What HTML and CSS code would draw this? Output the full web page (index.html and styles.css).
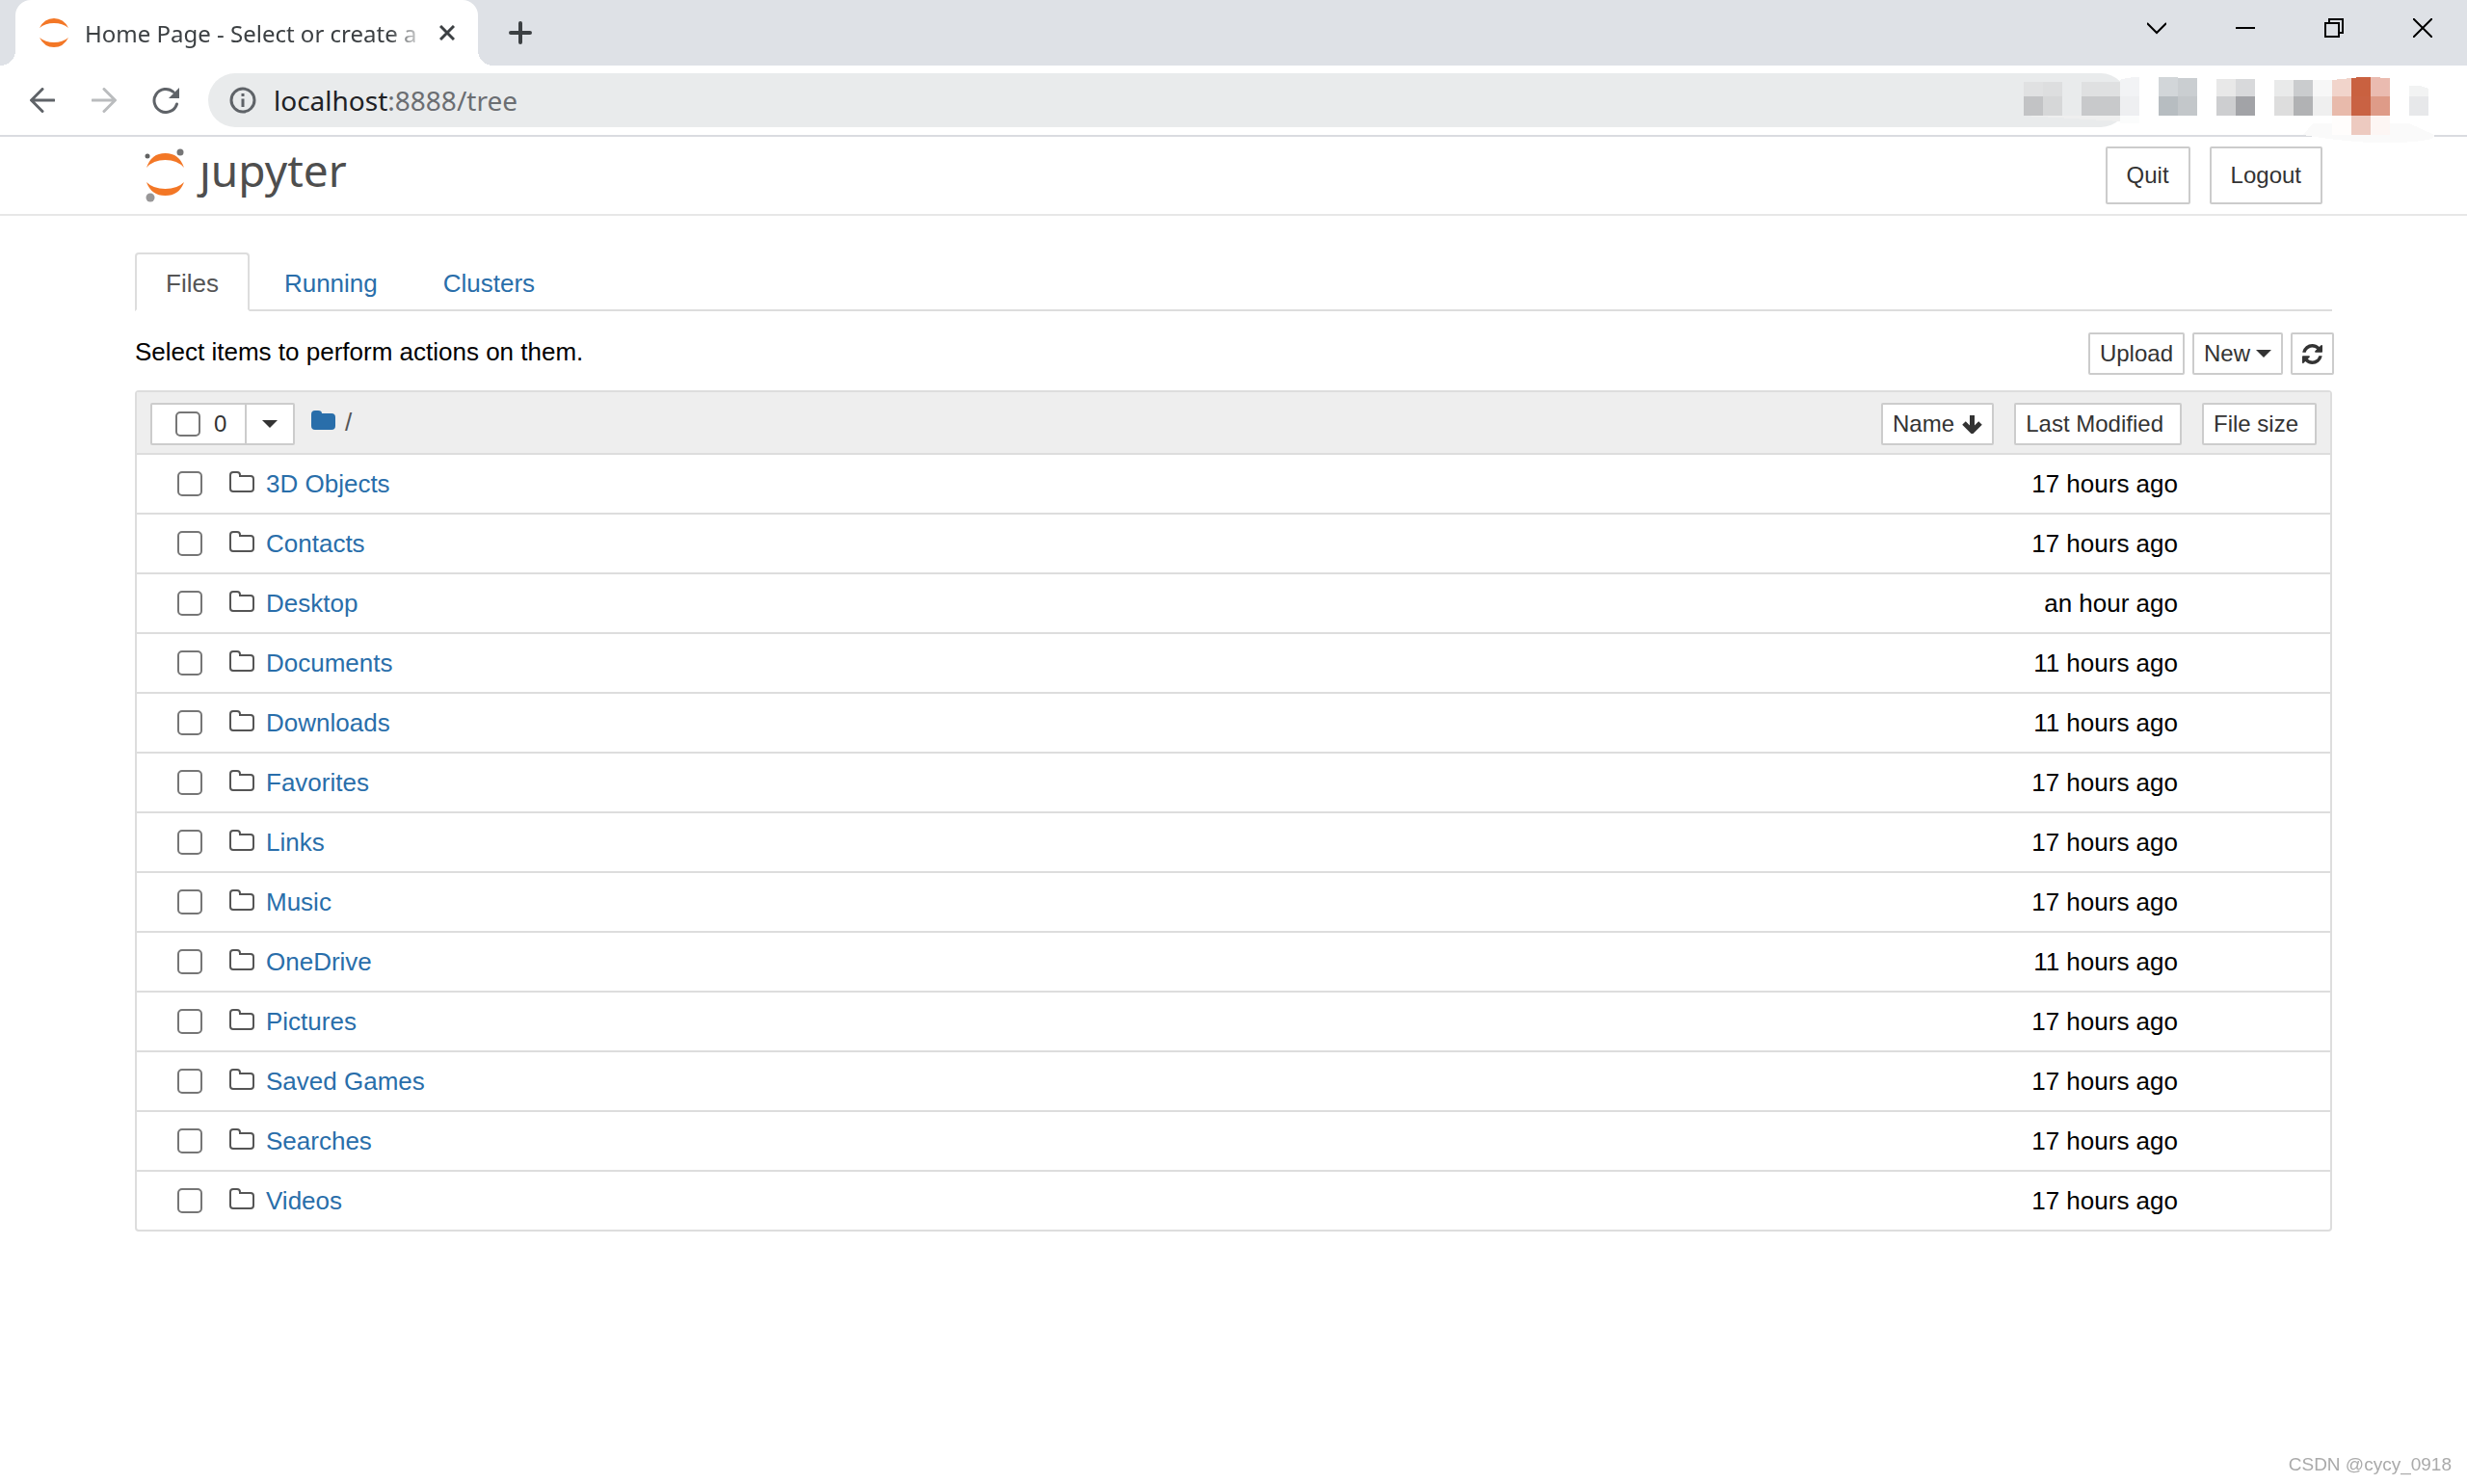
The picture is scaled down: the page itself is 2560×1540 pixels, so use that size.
FILE: index.html
```
<!DOCTYPE html>
<html lang="en">
<head>
<meta charset="utf-8">
<title>Home Page - Select or create a notebook</title>
<link rel="stylesheet" href="styles.css">
</head>
<body>
<svg class="defs" aria-hidden="true">
  <symbol id="folder-o" viewBox="0 0 26 22"><path d="M1 4Q1 1 4 1H8Q11 1 11 4V5H22Q25 5 25 8V18Q25 21 22 21H4Q1 21 1 18Z" fill="none" stroke="#555" stroke-width="2"/></symbol>
</svg>
<div class="tabstrip">
  <div class="browser-tab">
    <svg class="favicon" viewBox="0 0 30 30"><path d="M0 10Q5 0 15 0T30 10Q24 5 15 5T0 10ZM0 20Q5 30 15 30T30 20Q24 25 15 25T0 20Z" fill="#f37726"/></svg>
    <span class="tab-title">Home Page - Select or create a</span>
    <button class="icon-btn" aria-label="Close tab"><svg width="16" height="16" viewBox="0 0 16 16"><path d="M1 1L15 15M15 1L1 15" stroke="#3c4043" stroke-width="3"/></svg></button>
  </div>
  <button class="icon-btn new-tab" aria-label="New tab"><svg width="24" height="24" viewBox="0 0 24 24"><path d="M12 2V22M2 12H22" stroke="#3c4043" stroke-width="4" stroke-linecap="round"/></svg></button>
  <div class="window-controls">
    <button class="icon-btn" aria-label="Search tabs"><svg width="20" height="20" viewBox="0 0 20 20"><path d="M0 5L10 15L20 5" fill="none" stroke="#000" stroke-width="2"/></svg></button>
    <button class="icon-btn" aria-label="Minimize"><svg width="20" height="20" viewBox="0 0 20 20"><path d="M0 10H20" stroke="#000" stroke-width="2"/></svg></button>
    <button class="icon-btn" aria-label="Restore"><svg width="20" height="20" viewBox="0 0 20 20"><path d="M1 5H15V19H1ZM5 5V1H19V15H15" fill="none" stroke="#000" stroke-width="2"/></svg></button>
    <button class="icon-btn" aria-label="Close"><svg width="20" height="20" viewBox="0 0 20 20"><path d="M0 0L20 20M20 0L0 20" stroke="#000" stroke-width="2"/></svg></button>
  </div>
</div>
<div class="toolbar">
  <button class="icon-btn nav-btn" aria-label="Back"><svg width="26" height="26" viewBox="0 0 26 26"><path d="M25 13H2M13 1.500L1.500 13L13 24.500" fill="none" stroke="#5f6368" stroke-width="3" stroke-linecap="round"/></svg></button>
  <button class="icon-btn nav-btn" aria-label="Forward"><svg width="26" height="26" viewBox="0 0 26 26"><path d="M1 13H24M13 1.500L24.500 13L13 24.500" fill="none" stroke="#babcbe" stroke-width="3" stroke-linecap="round"/></svg></button>
  <button class="icon-btn nav-btn" aria-label="Reload"><svg width="28" height="28" viewBox="0 0 28 28"><path d="M25.500 18A12 12 0 1 1 22 5.500" fill="none" stroke="#5f6368" stroke-width="3" stroke-linecap="round"/><path d="M28 1V12H17Z" fill="#5f6368"/></svg></button>
  <div class="omnibox">
    <svg width="28" height="28" viewBox="0 0 28 28"><circle cx="14" cy="14" r="12" fill="none" stroke="#5f6368" stroke-width="3"/><path d="M14 12.500V21M14 7V10" stroke="#5f6368" stroke-width="3"/></svg>
    <span class="url">localhost<span class="url-rest">:8888/tree</span></span>
  </div>
  <svg class="mosaic" width="500" height="84" viewBox="0 0 500 84" shape-rendering="crispEdges">
    <path d="M330 72Q390 82 430 80T466 72L440 60H340Z" fill="#fafafa"/>
    <path d="M40 17H60V32H40Z" fill="#e0e1e2"/><path d="M60 17H80V32H60Z" fill="#dddedf"/>
    <path d="M40 32H60V52H40Z" fill="#c2c3c5"/><path d="M60 32H80V52H60Z" fill="#d6d7d8"/>
    <path d="M100 17H140V32H100Z" fill="#dfe0e1"/><path d="M100 32H140V52H100Z" fill="#c8c9cb"/>
    <path d="M140 15Q147 12 160 12V32H140Z" fill="#f2f3f5"/><path d="M140 32H160V52H140Z" fill="#eeeff1"/><path d="M140 52H160V60H140Z" fill="#fbfcfc"/>
    <path d="M40 52H140V58Z" fill="#efefef"/>
    <path d="M180 12H200V32H180Z" fill="#d2d6d9"/><path d="M200 13H220V32H200Z" fill="#caced1"/>
    <path d="M180 32H200V52H180Z" fill="#b7bdc1"/><path d="M200 32H220V52H200Z" fill="#c3c7ca"/>
    <path d="M240 14H260V32H240Z" fill="#e8e8e8"/><path d="M260 14H280V32H260Z" fill="#d8d9db"/>
    <path d="M240 32H260V52H240Z" fill="#cdced0"/><path d="M260 32H280V52H260Z" fill="#a2a3a7"/>
    <path d="M300 15H320V32H300Z" fill="#e9eaea"/><path d="M320 15H340V32H320Z" fill="#caccce"/><path d="M340 15H360V32H340Z" fill="#f7f7f7"/>
    <path d="M300 32H320V52H300Z" fill="#dddddd"/><path d="M320 32H340V52H320Z" fill="#b1b2b4"/><path d="M340 32H360V52H340Z" fill="#efefef"/>
    <path d="M360 15L380 13V32H360Z" fill="#f1d4cb"/><path d="M380 13L390 12H400V32H380Z" fill="#c96140"/><path d="M400 12L420 13V32H400Z" fill="#eabbb0"/>
    <path d="M360 32H380V52H360Z" fill="#e8baab"/><path d="M380 32H400V52H380Z" fill="#c96243"/><path d="M400 32H420V52H400Z" fill="#de9b88"/>
    <path d="M360 52H380V72H360Z" fill="#fffdfc"/><path d="M380 52H400V72H380Z" fill="#edcac0"/><path d="M400 52H420V72H400Z" fill="#fdf6f4"/>
    <path d="M440 21H452L460 24V32H440Z" fill="#f2f3f3"/><path d="M440 32H460V52H440Z" fill="#e7e8ea"/>
  </svg>
</div>
<header class="site-header">
  <div class="container header-inner">
    <a class="logo" href="#" aria-label="jupyter">
      <svg width="42" height="56" viewBox="0 0 42 56"><path d="M2 20Q7 5 21.500 5T41 20Q34 12 21.500 12T2 20ZM2 35Q7 49 21.500 49T41 35Q34 42 21.500 42T2 35Z" fill="#f37726"/><circle cx="37" cy="4" r="3.500" fill="#767677"/><circle cx="3" cy="8" r="2.500" fill="#616262"/><circle cx="6" cy="51" r="4.500" fill="#989798"/></svg>
      <span class="logo-text">ȷupyter</span>
    </a>
    <div class="header-actions">
      <button class="btn btn-lg">Quit</button>
      <button class="btn btn-lg">Logout</button>
    </div>
  </div>
</header>
<main class="container">
  <nav class="tabs">
    <a class="tab active" href="#files">Files</a>
    <a class="tab" href="#running">Running</a>
    <a class="tab" href="#clusters">Clusters</a>
  </nav>
  <div class="list-toolbar">
    <span class="hint">Select items to perform actions on them.</span>
    <div class="list-actions">
      <button class="btn">Upload</button>
      <button class="btn">New<span class="caret"></span></button>
      <button class="btn" aria-label="Refresh"><svg width="21" height="21" viewBox="0 0 1536 1536"><path fill="#333" d="M1511 928q0 5-1 7-64 268-268 434.500T764 1536q-146 0-282.500-55T238 1324l-129 129q-19 19-45 19t-45-19-19-45V960q0-26 19-45t45-19h448q26 0 45 19t19 45-19 45l-137 137q71 66 161 102t187 36q134 0 250-65t186-179q11-17 53-117 8-23 30-23h192q13 0 22.500 9.500t9.500 22.500zm25-800v448q0 26-19 45t-45 19h-448q-26 0-45-19t-19-45 19-45l138-138Q969 256 768 256q-134 0-250 65T332 500q-11 17-53 117-8 23-30 23H50q-13 0-22.500-9.500T18 608v-7q65-268 270-434.500T768 0q146 0 284 55.500T1297 212l130-129q19-19 45-19t45 19 19 45z"/></svg></button>
    </div>
  </div>
  <table class="files">
    <thead>
      <tr>
        <th class="col-name">
          <div class="name-head">
            <div class="selector">
              <label class="select-all"><input type="checkbox"><span>0</span></label>
              <button class="select-menu" aria-label="Select menu"><span class="caret"></span></button>
            </div>
            <a class="crumb" href="#root" aria-label="Home folder"><svg width="25" height="20" viewBox="0 0 25 20"><path d="M0 4Q0 0 4 0H7Q11 0 11 3H21Q25 3 25 7V16Q25 20 21 20H4Q0 20 0 16Z" fill="#296eaa"/></svg></a>
            <span class="slash">/</span>
            <button class="btn sort-name">Name<svg width="21" height="20" viewBox="0 0 21 20"><path d="M10.500 1V17M2 9L10.500 17.500L19 9" fill="none" stroke="#333" stroke-width="5"/></svg></button>
          </div>
        </th>
        <th class="col-modified"><button class="btn wide">Last Modified</button></th>
        <th class="col-size"><button class="btn wide">File size</button></th>
      </tr>
    </thead>
    <tbody>
      <tr><td><div class="item"><input type="checkbox" aria-label="3D Objects"><svg class="folder"><use href="#folder-o"/></svg><a href="#">3D Objects</a></div></td><td class="time">17 hours ago</td><td></td></tr>
      <tr><td><div class="item"><input type="checkbox" aria-label="Contacts"><svg class="folder"><use href="#folder-o"/></svg><a href="#">Contacts</a></div></td><td class="time">17 hours ago</td><td></td></tr>
      <tr><td><div class="item"><input type="checkbox" aria-label="Desktop"><svg class="folder"><use href="#folder-o"/></svg><a href="#">Desktop</a></div></td><td class="time">an hour ago</td><td></td></tr>
      <tr><td><div class="item"><input type="checkbox" aria-label="Documents"><svg class="folder"><use href="#folder-o"/></svg><a href="#">Documents</a></div></td><td class="time">11 hours ago</td><td></td></tr>
      <tr><td><div class="item"><input type="checkbox" aria-label="Downloads"><svg class="folder"><use href="#folder-o"/></svg><a href="#">Downloads</a></div></td><td class="time">11 hours ago</td><td></td></tr>
      <tr><td><div class="item"><input type="checkbox" aria-label="Favorites"><svg class="folder"><use href="#folder-o"/></svg><a href="#">Favorites</a></div></td><td class="time">17 hours ago</td><td></td></tr>
      <tr><td><div class="item"><input type="checkbox" aria-label="Links"><svg class="folder"><use href="#folder-o"/></svg><a href="#">Links</a></div></td><td class="time">17 hours ago</td><td></td></tr>
      <tr><td><div class="item"><input type="checkbox" aria-label="Music"><svg class="folder"><use href="#folder-o"/></svg><a href="#">Music</a></div></td><td class="time">17 hours ago</td><td></td></tr>
      <tr><td><div class="item"><input type="checkbox" aria-label="OneDrive"><svg class="folder"><use href="#folder-o"/></svg><a href="#">OneDrive</a></div></td><td class="time">11 hours ago</td><td></td></tr>
      <tr><td><div class="item"><input type="checkbox" aria-label="Pictures"><svg class="folder"><use href="#folder-o"/></svg><a href="#">Pictures</a></div></td><td class="time">17 hours ago</td><td></td></tr>
      <tr><td><div class="item"><input type="checkbox" aria-label="Saved Games"><svg class="folder"><use href="#folder-o"/></svg><a href="#">Saved Games</a></div></td><td class="time">17 hours ago</td><td></td></tr>
      <tr><td><div class="item"><input type="checkbox" aria-label="Searches"><svg class="folder"><use href="#folder-o"/></svg><a href="#">Searches</a></div></td><td class="time">17 hours ago</td><td></td></tr>
      <tr><td><div class="item"><input type="checkbox" aria-label="Videos"><svg class="folder"><use href="#folder-o"/></svg><a href="#">Videos</a></div></td><td class="time">17 hours ago</td><td></td></tr>
    </tbody>
  </table>
</main>
<div class="watermark">CSDN @cycy_0918</div>
</body>
</html>
```
FILE: styles.css
```
* { box-sizing: border-box; }
body {
  margin: 0;
  min-height: 100vh;
  background: #fff;
  color: #000;
  font: 26px/36px "Liberation Sans", Arial, sans-serif;
}
svg { display: block; flex: none; }
button { font: inherit; color: inherit; cursor: pointer; }
a { color: #296eaa; text-decoration: none; }
.defs { position: absolute; width: 0; height: 0; }
.icon-btn { display: flex; padding: 0; border: 0; background: none; }

/* Browser frame */
.tabstrip {
  display: flex;
  align-items: center;
  height: 68px;
  padding-left: 16px;
  background: #dee1e6;
}
.browser-tab {
  position: relative;
  display: flex;
  align-items: center;
  width: 480px;
  height: 68px;
  padding: 0 24px 0 25px;
  border-radius: 16px 16px 0 0;
  background: #fff;
}
.browser-tab::before,
.browser-tab::after {
  content: "";
  position: absolute;
  bottom: 0;
  width: 16px;
  height: 16px;
}
.browser-tab::before { right: 100%; background: radial-gradient(circle at 0 0, transparent 16px, #fff 16px); }
.browser-tab::after { left: 100%; background: radial-gradient(circle at 100% 0, transparent 16px, #fff 16px); }
.favicon { width: 30px; height: 30px; }
.tab-title {
  flex: 1;
  margin: 0 12px 0 17px;
  padding-top: 2px;
  white-space: nowrap;
  color: #3c4043;
  font: 24px/36px "Noto Sans", "Open Sans", sans-serif;
  -webkit-mask-image: linear-gradient(to left, transparent, #000 40px);
  mask-image: linear-gradient(to left, transparent, #000 40px);
}
.new-tab { margin-left: 32px; }
.window-controls {
  display: flex;
  gap: 72px;
  margin-left: auto;
  padding: 0 36px 10px 0;
}
.toolbar {
  position: relative;
  display: flex;
  align-items: center;
  height: 74px;
  padding: 0 352px 0 12px;
  border-bottom: 2px solid #dadce0;
}
.nav-btn { width: 64px; justify-content: center; }
.omnibox {
  display: flex;
  flex: 1;
  align-items: center;
  gap: 18px;
  height: 56px;
  margin-left: 12px;
  padding-left: 22px;
  border-radius: 28px;
  background: #e9ebec;
}
.url { color: #202124; font: 28px/36px "Noto Sans", "Open Sans", sans-serif; }
.url-rest { color: #6b6e72; }
.mosaic { position: absolute; top: 0; right: 0; }

/* Notebook page */
.container { max-width: 2280px; margin: 0 auto; }
.site-header { border-bottom: 2px solid #e7e7e7; }
.header-inner {
  display: flex;
  align-items: center;
  justify-content: space-between;
  height: 80px;
  padding: 0 10px;
}
.logo {
  display: flex;
  align-items: center;
  gap: 15px;
  color: #4e4e4e;
  font: 46px/64px "Noto Sans", "Open Sans", sans-serif;
}
.logo-text { padding-bottom: 12px; }
.header-actions { display: flex; gap: 20px; }
.btn {
  display: flex;
  align-items: center;
  gap: 6px;
  padding: 2px 10px;
  border: 2px solid #ccc;
  border-radius: 2px;
  background: #fff;
  color: #333;
  font-size: 24px;
  line-height: 36px;
}
.btn-lg { padding: 10px 20px; }
.tabs {
  display: flex;
  gap: 4px;
  margin-top: 38px;
  border-bottom: 2px solid #ddd;
}
.tab {
  margin-bottom: -2px;
  padding: 12px 30px 9px;
  border: 2px solid transparent;
  border-radius: 4px 4px 0 0;
}
.tab.active { border-color: #ddd #ddd #fff; background: #fff; color: #555; }
.list-toolbar {
  display: flex;
  align-items: center;
  justify-content: space-between;
  margin: 22px -2px 16px 0;
}
.hint { padding-bottom: 4px; }
.list-actions { display: flex; gap: 8px; }
.caret {
  width: 16px;
  height: 8px;
  background: #333;
  clip-path: polygon(0 0, 100% 0, 50% 100%);
}
input[type="checkbox"] {
  appearance: none;
  flex: none;
  width: 26px;
  height: 26px;
  margin: 0;
  border: 2px solid #767676;
  border-radius: 5px;
  background: #fff;
}

/* File list */
.files {
  width: 100%;
  border: 2px solid #ddd;
  border-radius: 4px;
  border-spacing: 0;
  table-layout: fixed;
}
th { padding: 11px 12px 8px 0; background: #eee; font-weight: 400; border-bottom: 2px solid #ddd; }
.col-modified { width: 195px; }
.col-size { width: 142px; padding-right: 14px; }
th .btn { margin-left: auto; }
.sort-name { gap: 8px; }
.wide { padding-right: 17px; }
.name-head { display: flex; align-items: center; padding-left: 14px; }
.selector {
  display: flex;
  height: 44px;
  border: 2px solid #ccc;
  border-radius: 2px;
  background: #fff;
  color: #333;
}
.select-all {
  display: flex;
  align-items: center;
  gap: 14px;
  width: 98px;
  padding-left: 24px;
  border-right: 2px solid #ccc;
  font-size: 24px;
}
.select-menu {
  display: flex;
  align-items: center;
  justify-content: center;
  width: 48px;
  padding: 0;
  border: 0;
  background: none;
}
.crumb { margin-left: 17px; padding-bottom: 8px; }
.slash { margin-left: 10px; padding-bottom: 4px; color: #555; }
td { padding: 12px 0; border-bottom: 2px solid #ddd; }
tbody tr:last-child td { border-bottom: 0; }
.item { display: flex; align-items: center; padding-left: 42px; }
.folder { width: 26px; height: 22px; margin: 0 12px 4px 28px; }
td.time { padding-right: 16px; text-align: right; }
.watermark {
  position: fixed;
  right: 16px;
  bottom: 2px;
  color: #aaa;
  font: 19px/36px "Liberation Sans", Arial, sans-serif;
}
```
